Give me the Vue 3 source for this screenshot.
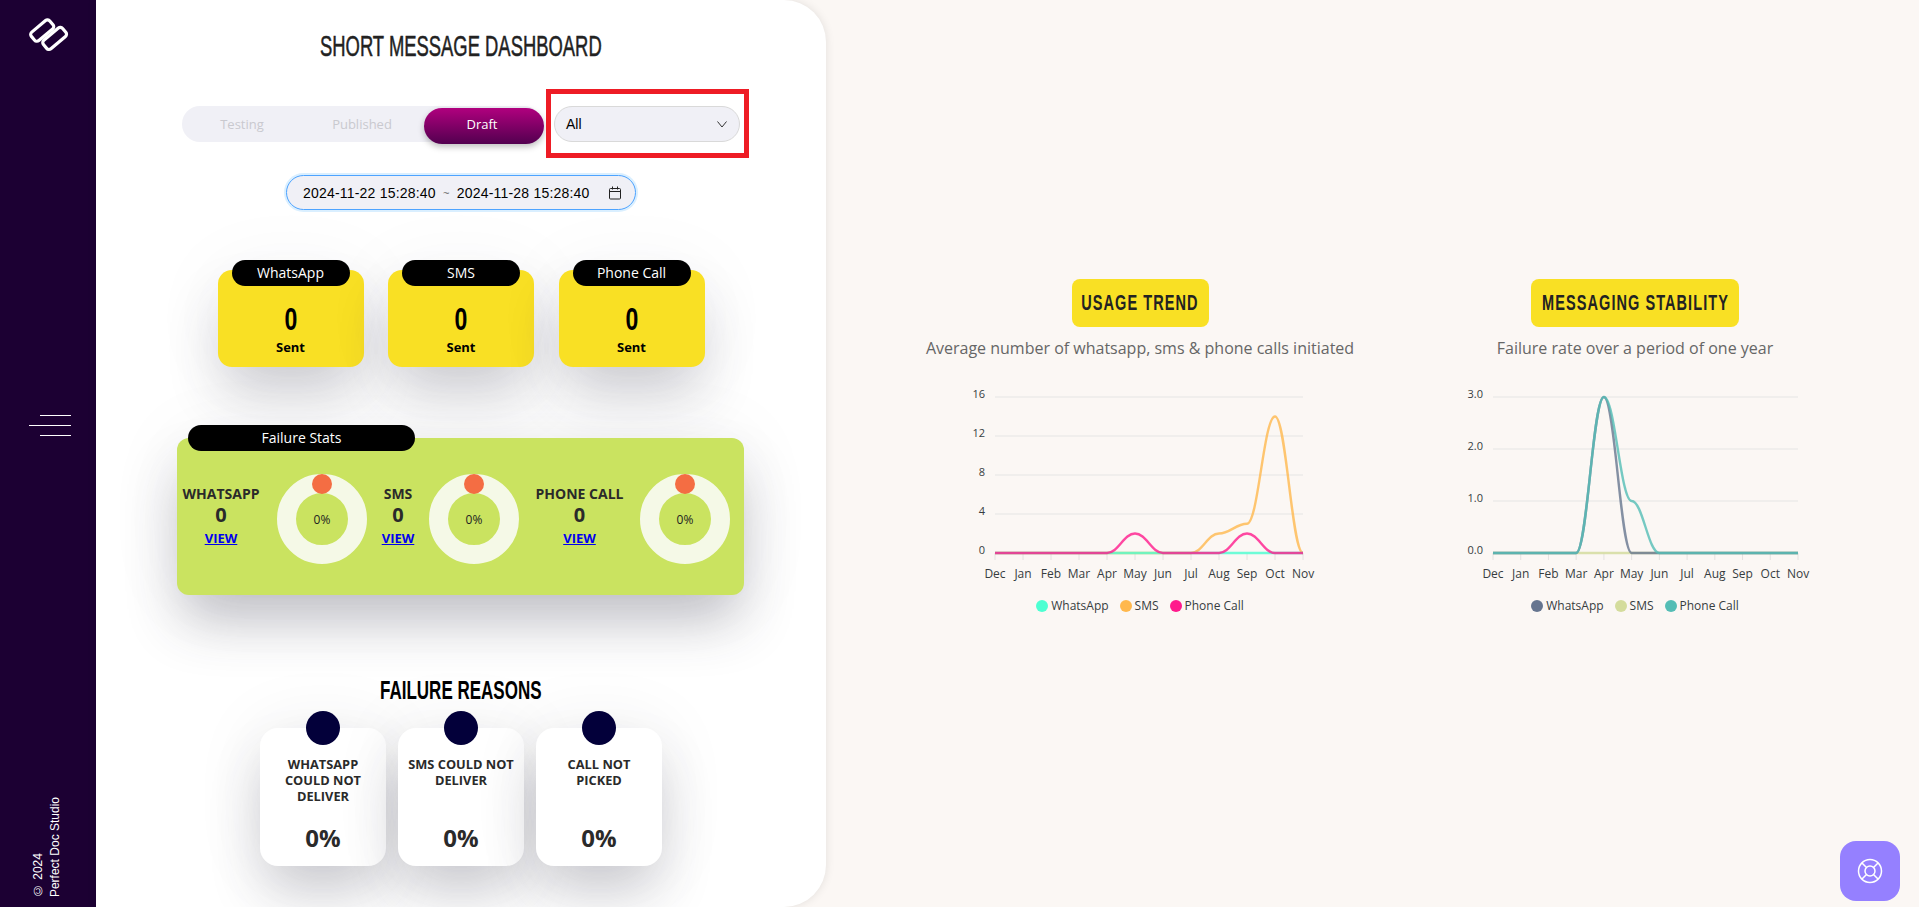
<template>
  <div class="page">
    <aside class="sidebar">
      <svg class="logo" width="40" height="40" viewBox="0 0 40 40">
        <g transform="rotate(-40 20 20)" fill="none" stroke="#fff" stroke-width="3.2" stroke-linejoin="round">
          <rect x="5" y="7.5" width="24" height="11" rx="3" />
          <rect x="9" y="21.5" width="25" height="11" rx="3" />
        </g>
      </svg>
      <div class="burger">
        <span class="short"></span>
        <span></span>
        <span class="short"></span>
      </div>
      <div class="copyright">
        <div>© 2024</div>
        <div>Perfect Doc Studio</div>
      </div>
    </aside>

    <section class="panel">
      <h1 class="title"><span>SHORT MESSAGE DASHBOARD</span></h1>

      <div class="filters">
        <div class="toggle">
          <span v-for="t in tabs" :key="t" class="tab" :class="{ active: t === 'Draft' }">{{ t }}</span>
        </div>
        <div class="select">
          <span>All</span>
          <svg width="12" height="12" viewBox="0 0 12 12" fill="none" stroke="#333" stroke-width="1">
            <path d="M1.5 3.5 6 9l4.5-5.5" />
          </svg>
        </div>
        <div class="highlight"></div>
      </div>

      <div class="range">
        <span>2024-11-22 15:28:40</span>
        <span class="tilde">~</span>
        <span>2024-11-28 15:28:40</span>
        <svg class="cal" width="14" height="14" viewBox="0 0 14 14" fill="none" stroke="#222" stroke-width="1">
          <rect x="1.5" y="2.5" width="11" height="10.5" rx="1" />
          <path d="M1.5 5.5h11M4.5 0.5v3M9.5 0.5v3" />
        </svg>
      </div>

      <div class="sent-row">
        <div v-for="c in channels" :key="c" class="sent-card">
          <div class="pill">{{ c }}</div>
          <div class="sent-num"><span>0</span></div>
          <div class="sent-label">Sent</div>
        </div>
      </div>

      <div class="failure">
        <div class="pill failure-pill">Failure Stats</div>
        <template v-for="f in failures" :key="f">
          <div class="fail-label">
            <div class="fail-name">{{ f }}</div>
            <div class="fail-num">0</div>
            <a class="fail-link">VIEW</a>
          </div>
          <div class="donut">
            <span class="donut-dot"></span>
            <span class="donut-text">0%</span>
          </div>
        </template>
      </div>

      <h2 class="reasons-title"><span>FAILURE REASONS</span></h2>
      <div class="reasons">
        <div v-for="r in reasons" :key="r" class="reason">
          <span class="reason-dot"></span>
          <div class="reason-name">{{ r }}</div>
          <div class="reason-val">0%</div>
        </div>
      </div>
    </section>

    <main class="charts">
      <div v-for="ch in charts" :key="ch.title" class="chart-col">
        <div class="badge" :style="{ width: ch.badgeWidth + 'px' }"><span>{{ ch.title }}</span></div>
        <p class="sub">{{ ch.sub }}</p>
        <svg class="chart" width="480" height="206" viewBox="0 0 480 206">
          <g v-for="(g, i) in ch.grid" :key="i">
            <line :x1="ch.x0" :x2="ch.x1" :y1="g.y" :y2="g.y" class="gridline" />
            <text :x="ch.labelX" :y="g.y + 1" text-anchor="end" class="ylabel">{{ g.label }}</text>
          </g>
          <g v-for="(m, i) in months" :key="m">
            <line :x1="xAt(ch, i)" :x2="xAt(ch, i)" y1="173" y2="180" class="tick" />
            <text :x="xAt(ch, i)" y="198" text-anchor="middle" class="xlabel">{{ m }}</text>
          </g>
          <path
            v-for="s in ch.drawn"
            :key="s.name"
            :d="linePath(ch, s.data)"
            :stroke="s.color"
            class="series"
          />
        </svg>
        <div class="legend">
          <span v-for="s in ch.series" :key="s.name" class="legend-item">
            <i class="marker" :style="{ background: s.color }"></i>{{ s.name }}
          </span>
        </div>
      </div>
    </main>

    <button class="help">
      <svg width="26" height="26" viewBox="0 0 26 26" fill="none" stroke="#fff" stroke-width="1.5">
        <circle cx="13" cy="13" r="11.5" />
        <circle cx="13" cy="13" r="5" />
        <path d="M5 5l4.5 4.5M21 5l-4.5 4.5M5 21l4.5-4.5M21 21l-4.5-4.5" />
      </svg>
    </button>
  </div>
</template>

<script setup>
const tabs = ['Testing', 'Published', 'Draft']
const channels = ['WhatsApp', 'SMS', 'Phone Call']
const failures = ['WHATSAPP', 'SMS', 'PHONE CALL']
const reasons = ['WHATSAPP COULD NOT DELIVER', 'SMS COULD NOT DELIVER', 'CALL NOT PICKED']
const months = ['Dec', 'Jan', 'Feb', 'Mar', 'Apr', 'May', 'Jun', 'Jul', 'Aug', 'Sep', 'Oct', 'Nov']

const zero = new Array(12).fill(0)

const usage = [
  { name: 'WhatsApp', color: '#4dffd2', data: zero },
  { name: 'SMS', color: '#ffb84d', data: [0, 0, 0, 0, 0, 0, 0, 0, 2, 3, 14, 0] },
  { name: 'Phone Call', color: '#ff1a8c', data: [0, 0, 0, 0, 0, 2, 0, 0, 0, 2, 0, 0] }
]

const stability = [
  { name: 'WhatsApp', color: '#66758f', data: [0, 0, 0, 0, 3, 0, 0, 0, 0, 0, 0, 0] },
  { name: 'SMS', color: '#d4dc9c', data: zero },
  { name: 'Phone Call', color: '#54bdb5', data: [0, 0, 0, 0, 3, 1, 0, 0, 0, 0, 0, 0] }
]

const charts = [
  {
    title: 'USAGE TREND',
    sub: 'Average number of whatsapp, sms & phone calls initiated',
    badgeWidth: 137,
    x0: 95,
    x1: 403,
    labelX: 85,
    max: 16,
    grid: [16, 12, 8, 4, 0].map((v) => ({ label: v, y: 173 - (v / 16) * 156 })),
    series: usage,
    drawn: [usage[1], usage[0], usage[2]]
  },
  {
    title: 'MESSAGING STABILITY',
    sub: 'Failure rate over a period of one year',
    badgeWidth: 208,
    x0: 98,
    x1: 403,
    labelX: 88,
    max: 3,
    grid: [3, 2, 1, 0].map((v) => ({ label: v.toFixed(1), y: 173 - (v / 3) * 156 })),
    series: stability,
    drawn: [stability[1], stability[0], stability[2]]
  }
]

const xAt = (ch, i) => ch.x0 + (i * (ch.x1 - ch.x0)) / 11

const linePath = (ch, data) => {
  const pts = data.map((v, i) => [xAt(ch, i), 173 - (v / ch.max) * 156])
  let d = `M${pts[0][0]} ${pts[0][1]}`
  for (let i = 1; i < pts.length; i++) {
    const [px, py] = pts[i - 1]
    const [x, y] = pts[i]
    const c = (x - px) * 0.4
    d += `C${px + c} ${py} ${x - c} ${y} ${x} ${y}`
  }
  return d
}
</script>

<style>
html,
body {
  margin: 0;
  background: #fbf7f4;
}
</style>

<style scoped>
.page {
  display: flex;
  width: 1919px;
  height: 907px;
  overflow: hidden;
  background: #fbf7f4;
  font-family: "Open Sans", sans-serif;
  color: #222;
}

.sidebar {
  flex: 0 0 96px;
  display: flex;
  flex-direction: column;
  align-items: center;
  background: #1c0033;
  padding-top: 14px;
  padding-bottom: 10px;
  box-sizing: border-box;
}

.logo {
  display: block;
  margin-left: 2px;
}

.burger {
  display: flex;
  flex-direction: column;
  align-items: flex-end;
  gap: 9px;
  width: 42px;
  margin-top: 361px;
  margin-left: 4px;
}

.burger span {
  display: block;
  width: 42px;
  height: 1px;
  background: #fff;
}

.burger .short {
  width: 31px;
}

.copyright {
  margin-top: auto;
  margin-left: -2px;
  writing-mode: vertical-rl;
  transform: rotate(180deg);
  font-family: "Liberation Sans", sans-serif;
  font-size: 12px;
  line-height: 17px;
  color: #fff;
}

.panel {
  flex: 0 0 730px;
  box-sizing: border-box;
  background: #fff;
  border-radius: 0 42px 42px 0;
  box-shadow: 0 0 10px rgba(0, 0, 0, 0.1);
  padding-top: 31px;
  z-index: 1;
}

.title {
  margin: 0;
  height: 30px;
  line-height: 30px;
  font-family: "Liberation Sans", sans-serif;
  font-size: 29px;
  font-weight: 400;
  text-align: center;
  color: #222;
  white-space: nowrap;
}

/* no Oswald here, so squeeze the nearest sans */
.title span,
.reasons-title span,
.badge span,
.sent-num span {
  display: inline-block;
}

.title span {
  transform: scaleX(0.635);
  -webkit-text-stroke: 0.5px #222;
}

.filters {
  position: relative;
  display: flex;
  justify-content: center;
  gap: 12px;
  margin-top: 45px;
  height: 36px;
}

.toggle {
  display: flex;
  width: 360px;
  height: 36px;
  border-radius: 18px;
  background: #f0f0f6;
}

.tab {
  position: relative;
  box-sizing: border-box;
  width: 120px;
  text-align: center;
  line-height: 36px;
  font-size: 13px;
  color: #c9c9cf;
}

.tab.active {
  left: 2px;
  top: 2px;
  height: 36px;
  padding-right: 4px;
  line-height: 32px;
  border-radius: 18px;
  color: #fff;
  background: linear-gradient(#b0007e, #52004f);
  box-shadow: 0 3px 6px rgba(0, 0, 0, 0.25);
}

.select {
  box-sizing: border-box;
  display: flex;
  align-items: center;
  justify-content: space-between;
  width: 186px;
  height: 36px;
  padding: 0 11px 0 11px;
  border: 1px solid #d9d9d9;
  border-radius: 18px;
  background: #f0f0f6;
  font-family: "Liberation Sans", sans-serif;
  font-size: 14px;
  color: #000;
}

.highlight {
  position: absolute;
  left: 450px;
  top: -17px;
  width: 203px;
  height: 69px;
  box-sizing: border-box;
  border: 5px solid #ee1c25;
}

.range {
  box-sizing: border-box;
  display: flex;
  align-items: center;
  width: 350px;
  height: 35px;
  margin: 33px auto 0;
  padding: 0 13px 0 16px;
  border: 1px solid #4da3ff;
  border-radius: 18px;
  background: #f0f0f6;
  box-shadow: 0 0 0 2px rgba(5, 145, 255, 0.15);
  font-family: "Liberation Sans", sans-serif;
  font-size: 14px;
  letter-spacing: 0.2px;
  color: #000;
}

.tilde {
  width: 21px;
  text-align: center;
  font-size: 11px;
  color: #666;
}

.cal {
  margin-left: auto;
}

.sent-row {
  display: flex;
  justify-content: center;
  gap: 24.5px;
  margin-top: 60px;
}

.sent-card {
  position: relative;
  box-sizing: border-box;
  width: 146px;
  height: 97px;
  padding-top: 31px;
  border-radius: 14px;
  background: #f9e024;
  text-align: center;
  color: #000;
  box-shadow: 0 30px 55px -6px rgba(50, 50, 70, 0.24), 0 0 80px rgba(50, 50, 70, 0.05);
}

.pill {
  position: absolute;
  left: 14px;
  top: -10px;
  width: 118px;
  height: 26px;
  line-height: 26px;
  border-radius: 13px;
  background: #000;
  color: #fff;
  font-size: 14px;
  text-align: center;
}

.sent-num {
  font-family: "Liberation Sans", sans-serif;
  font-size: 32px;
  font-weight: 700;
  line-height: 36px;
}

.sent-num span {
  transform: scaleX(0.72);
}

.sent-label {
  margin-top: 1px;
  font-size: 13px;
  font-weight: 700;
  line-height: 18px;
}

.failure {
  position: relative;
  box-sizing: border-box;
  display: grid;
  grid-template-columns: 100px 90px 62px 90px 121px 90px;
  width: 567px;
  height: 157px;
  margin: 71px 0 0 81px;
  padding-top: 36px;
  border-radius: 12px;
  background: #cae360;
  box-shadow: 0 30px 55px -6px rgba(50, 50, 70, 0.3), 0 0 80px rgba(50, 50, 70, 0.06);
}

.failure-pill {
  left: 11px;
  top: -13px;
  width: 227px;
}

.fail-label {
  padding-top: 10px;
  text-align: center;
  color: #2a2a2a;
}

.fail-label:nth-of-type(2) {
  padding-right: 12px;
}

.fail-name {
  font-size: 14px;
  font-weight: 700;
  line-height: 20px;
  white-space: nowrap;
}

.fail-num {
  font-size: 20px;
  font-weight: 700;
  line-height: 22px;
}

.fail-link {
  font-size: 13px;
  font-weight: 700;
  line-height: 22px;
  color: #0000ee;
  text-decoration: underline;
  cursor: pointer;
}

.donut {
  position: relative;
  box-sizing: border-box;
  width: 90px;
  height: 90px;
  border: 19px solid #f5f9e7;
  border-radius: 50%;
  display: flex;
  align-items: center;
  justify-content: center;
}

.donut-dot {
  position: absolute;
  left: 16px;
  top: -19px;
  width: 20px;
  height: 20px;
  border-radius: 50%;
  background: #f46d43;
}

.donut-text {
  font-size: 12px;
  color: #222;
}

.reasons-title {
  margin: 81px 0 0;
  height: 28px;
  line-height: 28px;
  text-align: center;
  font-family: "Liberation Sans", sans-serif;
  font-size: 25px;
  font-weight: 700;
  color: #000;
  white-space: nowrap;
}

.reasons-title span {
  transform: scaleX(0.68);
}

.reasons {
  display: flex;
  justify-content: center;
  gap: 12px;
  margin-top: 24px;
}

.reason {
  position: relative;
  box-sizing: border-box;
  width: 126px;
  height: 138px;
  padding: 28px 8px 0;
  border-radius: 18px;
  background: #fff;
  text-align: center;
  color: #2a2a2a;
  box-shadow: 0 30px 55px -6px rgba(50, 50, 70, 0.24), 0 0 70px rgba(50, 50, 70, 0.08);
}

.reason-dot {
  position: absolute;
  left: 46px;
  top: -17px;
  width: 34px;
  height: 34px;
  border-radius: 50%;
  background: #03003a;
}

.reason-name {
  height: 67px;
  font-size: 12.8px;
  font-weight: 700;
  line-height: 16px;
}

.reason-val {
  font-size: 24px;
  font-weight: 700;
  line-height: 30px;
}

.charts {
  display: flex;
  gap: 15px;
  padding: 279px 0 0 74px;
}

.chart-col {
  width: 480px;
  display: flex;
  flex-direction: column;
  align-items: center;
}

.badge {
  display: flex;
  justify-content: center;
  height: 48px;
  line-height: 48px;
  border-radius: 8px;
  background: #f9e024;
  font-family: "Liberation Sans", sans-serif;
  font-size: 22px;
  font-weight: 700;
  letter-spacing: 1.6px;
  color: #222;
  white-space: nowrap;
}

.badge span {
  transform: scaleX(0.66);
}

.sub {
  margin: 9px 0 0;
  height: 24px;
  line-height: 24px;
  font-size: 16px;
  color: #666;
  white-space: nowrap;
}

.chart {
  display: block;
  margin-top: 20px;
}

.gridline {
  stroke: #ecebea;
  stroke-width: 1.5;
}

.tick {
  stroke: #e4e2e0;
  stroke-width: 1;
}

.ylabel {
  font-size: 11px;
  fill: #373d3f;
}

.xlabel {
  font-size: 12px;
  fill: #373d3f;
}

.series {
  fill: none;
  stroke-width: 2.4;
  stroke-opacity: 0.8;
}

.legend {
  display: flex;
  justify-content: center;
  gap: 11px;
  margin-top: 11px;
  height: 18px;
  line-height: 18px;
  font-size: 12px;
  color: #373d3f;
}

.legend-item {
  display: flex;
  align-items: center;
}

.marker {
  width: 12px;
  height: 12px;
  margin-right: 3px;
  border-radius: 50%;
}

.help {
  position: fixed;
  left: 1840px;
  top: 841px;
  width: 60px;
  height: 60px;
  display: flex;
  align-items: center;
  justify-content: center;
  border: none;
  border-radius: 16px;
  background: #9580ff;
  padding: 0;
}
</style>
